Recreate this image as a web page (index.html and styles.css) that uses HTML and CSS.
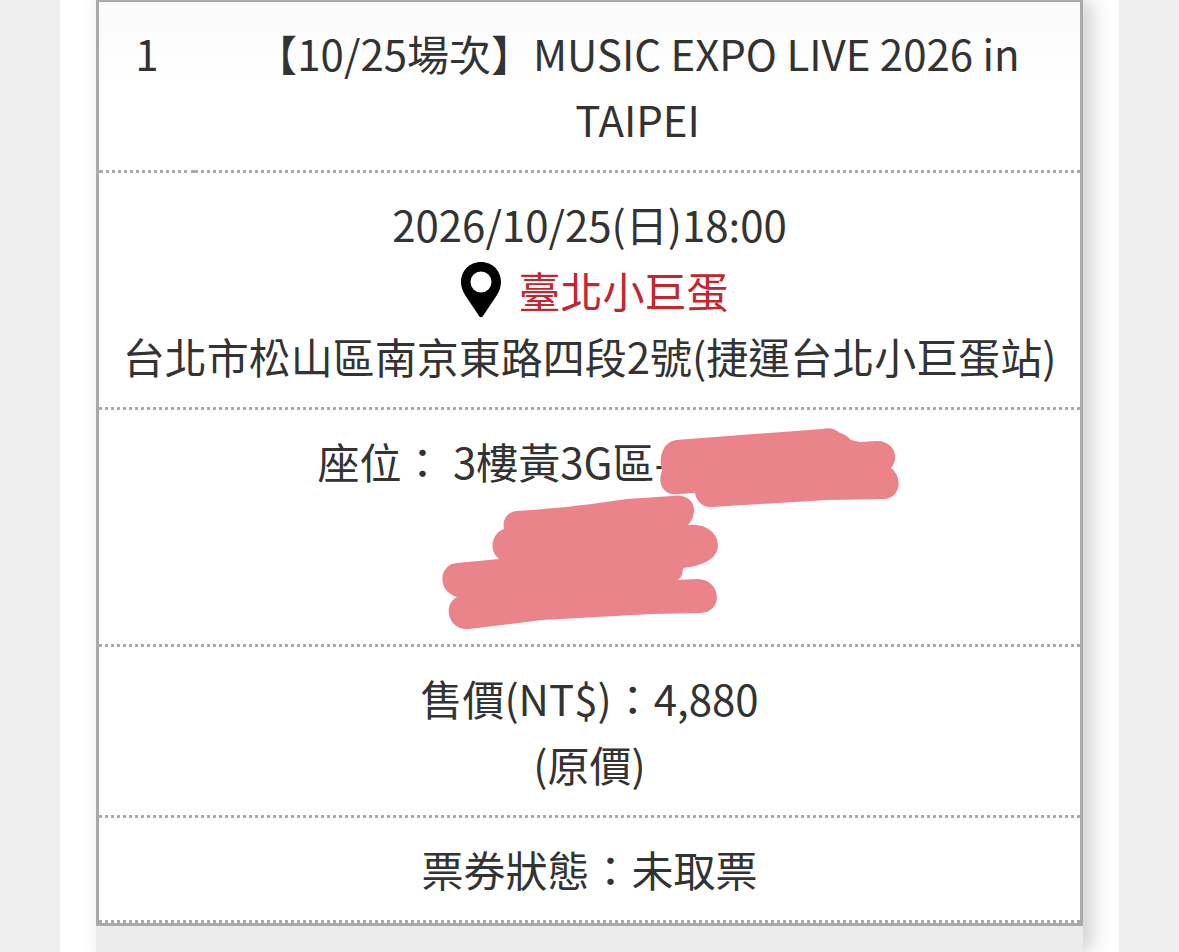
FILE: index.html
```html
<!DOCTYPE html>
<html lang="zh-Hant">
  <head>
    <meta charset="UTF-8" />
    <meta name="viewport" content="width=device-width, initial-scale=1.0" />
    <title>訂單明細</title>
    <link rel="stylesheet" href="styles.css">
  </head>
  <body>
    <main class="page">
      <div class="order">
        <table class="ticket">
          <tbody>
            <tr>
              <td class="number">1</td>
              <td>【10/25場次】MUSIC EXPO LIVE 2026 in TAIPEI</td>
            </tr>
            <tr>
              <td colspan="2">
                <div>2026/10/25(日)18:00</div>
                <div class="venue">
                  <svg class="pin" viewBox="0 0 42 56" aria-hidden="true">
                    <path fill-rule="evenodd" d="M21 0C9.500 0 1 8.800 1 20c0 5 1.700 9 4.200 13.200L19 54q2 2.500 4 0L36.800 33.200C39.300 29 41 25 41 20 41 8.800 32.500 0 21 0Zm0 9.500a10.500 10.500 0 1 1 0 21 10.500 10.500 0 0 1 0-21Z" />
                  </svg>
                  <a href="#">臺北小巨蛋</a>
                </div>
                <div>台北市松山區南京東路四段2號(捷運台北小巨蛋站)</div>
              </td>
            </tr>
            <tr>
              <td colspan="2">
                <div class="seat">
                  <span class="seat-text">座位： 3樓黃3G區-</span>
                  <svg class="scribble" viewBox="0 0 458 202" aria-hidden="true">
                    <path d="M234 12 380 1C388-1 393 1 398 5Q405 7 409 12L418 14 435 13C452 13 458 30 449 40C462 50 458 71 441 71L385 72 270 79C261 80 254 73 253 65L238 66C221 69 215 55 220 43C216 29 221 14 234 12Z" />
                    <path d="M74 83C110 81 145 77 185 71L230 68C250 64 259 82 246 97C263 95 276 104 276 118C275 132 259 138 241 140Q241 148 236 152L255 151C280 151 282 185 258 185L210 186 100 192 27 201C6 203 0 177 15 169C-6 163-3 136 15 135L57 131C46 122 50 105 62 101C60 91 66 84 74 83Z" />
                  </svg>
                </div>
              </td>
            </tr>
            <tr>
              <td colspan="2">
                <div>售價(NT$)：4,880</div>
                <div>(原價)</div>
              </td>
            </tr>
            <tr>
              <td colspan="2">票券狀態：未取票</td>
            </tr>
          </tbody>
        </table>
      </div>
    </main>
  </body>
</html>
```
FILE: styles.css
```css
* {
  margin: 0;
  padding: 0;
  box-sizing: border-box;
}

body {
  font-family: "Noto Sans CJK TC", sans-serif;
  font-size: 42px;
  line-height: 66px;
  color: #333;
  background-color: #efefef;
}

.page {
  display: flex;
  min-height: 100vh;
  margin: 0 60px;
  padding: 0 36px;
  background-color: #fff;
  overflow: hidden;
}

.order {
  flex: 1;
  background-color: #ececec;
  box-shadow: 8px 0 20px rgba(0, 0, 0, 0.2);
}

.ticket {
  width: 100%;
  border: 3px solid #aaa;
  border-top-width: 2px;
  border-spacing: 0;
  background: linear-gradient(#fafafa, #fff 80px);
}

.ticket td {
  padding: 18px 16px;
  border-bottom: 3px dotted #aaa;
  text-align: center;
  vertical-align: top;
}

.ticket .number {
  width: 96px;
}

.venue {
  display: flex;
  justify-content: center;
  align-items: center;
  gap: 16px;
  padding-left: 10px;
}

.venue a {
  color: #c1272d;
  text-decoration: none;
}

.pin {
  width: 42px;
  height: 56px;
}

.seat {
  position: relative;
  width: 544px;
  height: 198px;
  margin: 0 auto;
  text-align: left;
}

/* covers the private part of the seat number */
.scribble {
  position: absolute;
  top: 0;
  left: 124px;
  width: 458px;
  height: 202px;
  fill: #eb838b;
  overflow: visible;
}
```
